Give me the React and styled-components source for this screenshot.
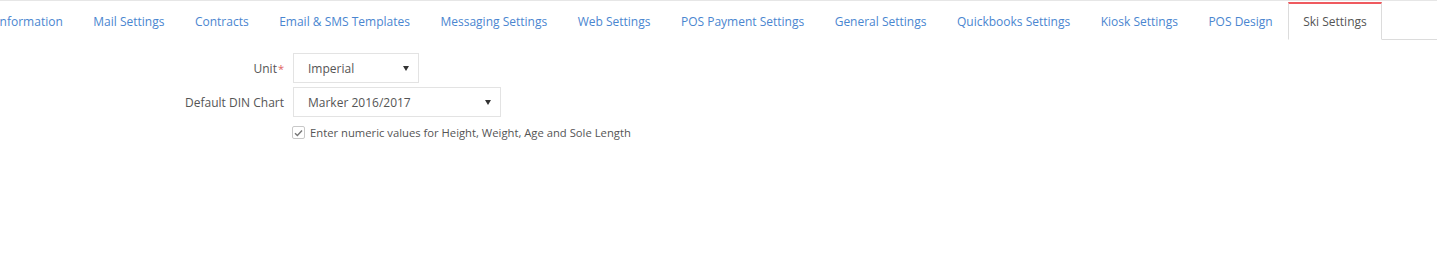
import React from 'react'
import styled, { createGlobalStyle } from 'styled-components'

const GlobalStyle = createGlobalStyle`
  html, body {
    margin: 0;
    padding: 0;
    background: #fff;
    font-family: 'Open Sans', 'Liberation Sans', sans-serif;
    overflow: hidden;
  }
`

const Page = styled.div`
  width: 1437px;
  height: 277px;
  overflow: hidden;
  border-top: 1px solid #e6e6e6;
  box-sizing: border-box;
`

const Tabs = styled.ul`
  display: flex;
  list-style: none;
  margin: 0 0 0 -19px;
  padding: 1px 0 0;
  height: 39px;
  box-sizing: border-box;
  border-bottom: 1px solid #dcdcdc;
`

const Tab = styled.li`
  display: flex;
  align-items: center;
  padding: 0 14.25px;
  margin-bottom: -1px;
  border: 1px solid transparent;
  border-top-width: 2px;
  font-size: 12px;
  color: #4a86d0;
  white-space: nowrap;
  background: #fff;

  ${(p) =>
    p.$active &&
    `
    color: #555;
    border-color: #dcdcdc;
    border-top-color: #ef5a5f;
    border-bottom-color: #fff;
  `}
`

const Form = styled.div`
  display: grid;
  grid-template-columns: 284px auto;
  column-gap: 9px;
  row-gap: 4px;
  padding-top: 13px;
  align-items: center;
`

const Label = styled.label`
  text-align: right;
  font-size: 12px;
  color: #555;
`

const Star = styled.span`
  color: #e06060;
  font-size: 11px;
  margin-left: 1px;
`

const Select = styled.div`
  width: ${(p) => p.$width}px;
  height: 30px;
  box-sizing: border-box;
  border: 1px solid #e3e3e3;
  display: flex;
  align-items: center;
  justify-content: space-between;
  padding: 0 9px 0 14px;
  font-size: 12px;
  color: #555;
`

const Caret = styled.span`
  width: 0;
  height: 0;
  border-left: 3px solid transparent;
  border-right: 3px solid transparent;
  border-top: 5px solid #333;
`

const CheckRow = styled.div`
  grid-column: 2;
  display: flex;
  align-items: center;
  gap: 5px;
  margin-top: 4px;
  margin-left: -1px;
  font-size: 11.25px;
  color: #555;
`

const Box = styled.span`
  width: 13px;
  height: 13px;
  box-sizing: border-box;
  border: 1px solid #c8c8c8;
  border-radius: 2px;
  display: flex;
  align-items: center;
  justify-content: center;
`

const tabs = [
  'Information',
  'Mail Settings',
  'Contracts',
  'Email & SMS Templates',
  'Messaging Settings',
  'Web Settings',
  'POS Payment Settings',
  'General Settings',
  'Quickbooks Settings',
  'Kiosk Settings',
  'POS Design',
  'Ski Settings',
]

export default function App() {
  return (
    <Page>
      <GlobalStyle />
      <Tabs>
        {tabs.map((t) => (
          <Tab key={t} $active={t === 'Ski Settings'}>
            {t}
          </Tab>
        ))}
      </Tabs>
      <Form>
        <Label>
          Unit<Star>*</Star>
        </Label>
        <Select $width={126}>
          Imperial
          <Caret />
        </Select>
        <Label>Default DIN Chart</Label>
        <Select $width={208}>
          Marker 2016/2017
          <Caret />
        </Select>
        <CheckRow>
          <Box>
            <svg width="9" height="8" viewBox="0 0 9 8">
              <path d="M1 4.2 L3.4 6.5 L8 1.5" fill="none" stroke="#777" strokeWidth="1.4" />
            </svg>
          </Box>
          Enter numeric values for Height, Weight, Age and Sole Length
        </CheckRow>
      </Form>
    </Page>
  )
}
